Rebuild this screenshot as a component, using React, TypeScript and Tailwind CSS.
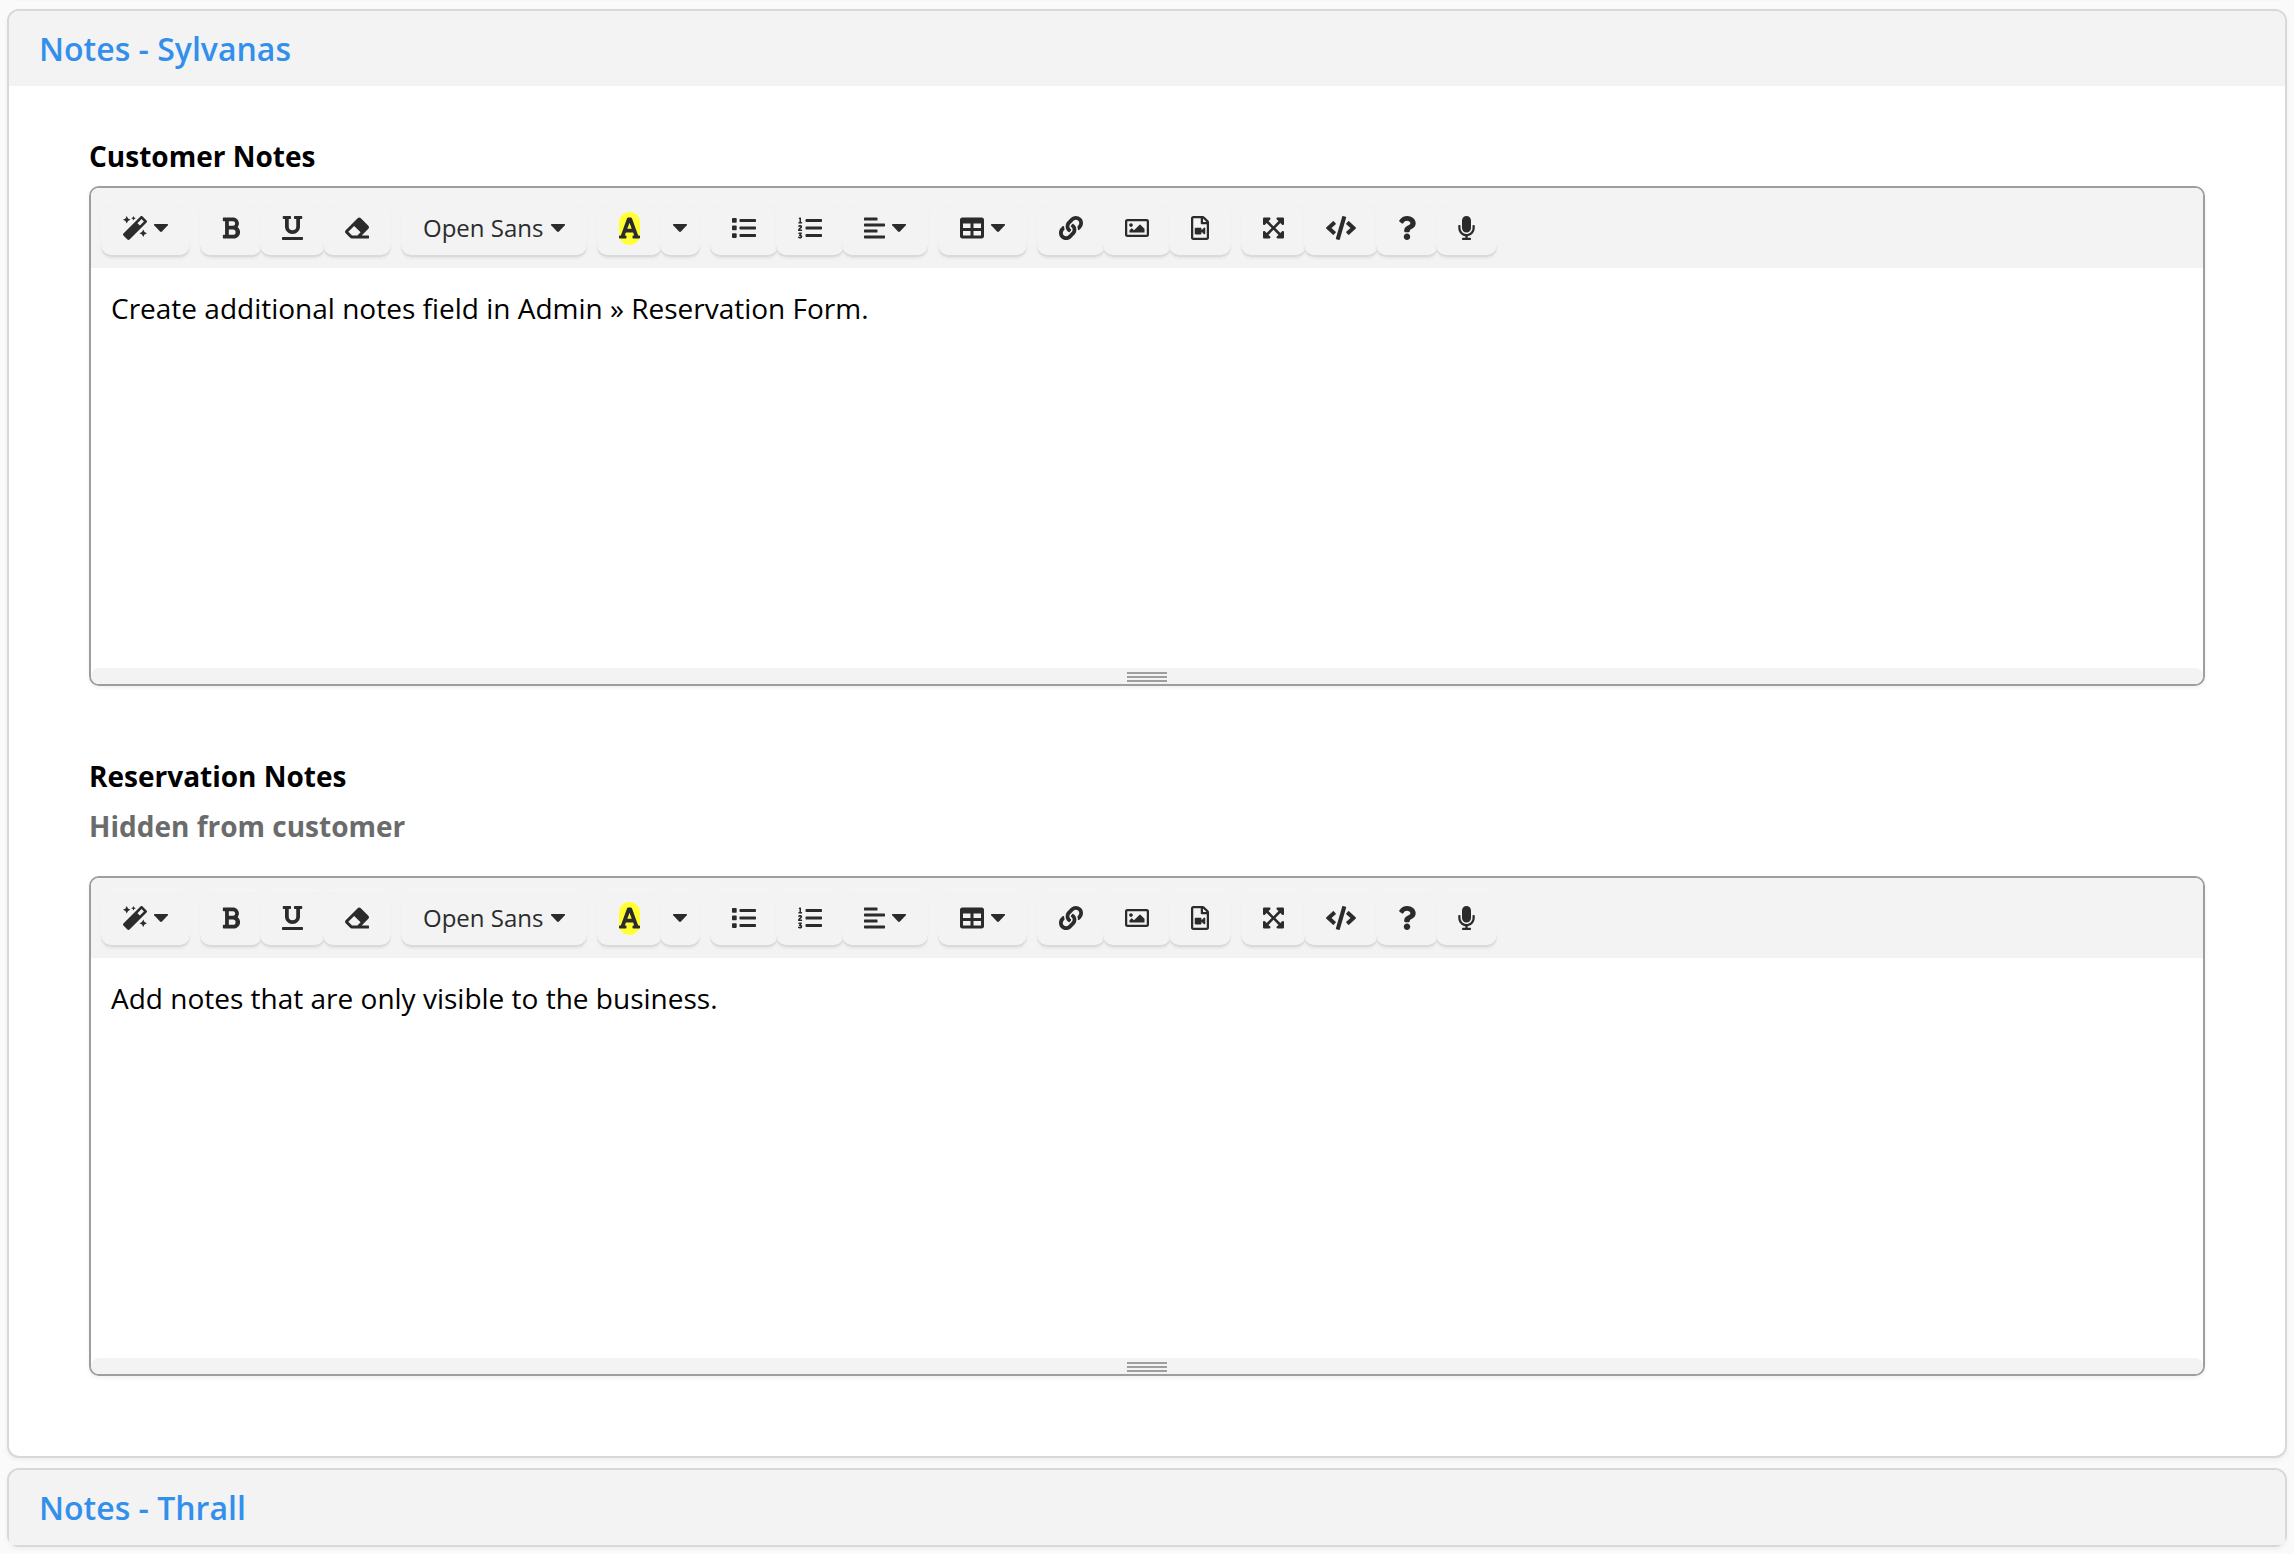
import React from "react";
import {
  FaMagic,
  FaBold,
  FaUnderline,
  FaEraser,
  FaFont,
  FaListOl,
  FaAlignLeft,
  FaTable,
  FaLink,
  FaRegImage,
  FaRegFileVideo,
  FaExpandArrowsAlt,
  FaCode,
  FaQuestion,
  FaMicrophone,
} from "react-icons/fa";

function Caret() {
  return (
    <svg viewBox="0 0 14 8" className="h-2 w-[14px]" fill="currentColor" aria-hidden="true">
      <path d="M.4 0h13.200q.6.500.2 1.200L8 7.600q-1 .8-2 0L.2 1.200Q-.2.500.4 0z" />
    </svg>
  );
}

function SquareList() {
  return (
    <svg viewBox="0 0 24 24" className="size-6" fill="currentColor" aria-hidden="true">
      <rect x="0" y="2" width="4.700" height="4.700" rx="0.8" />
      <rect x="0" y="9.600" width="4.700" height="4.700" rx="0.8" />
      <rect x="0" y="17.200" width="4.700" height="4.700" rx="0.8" />
      <rect x="7.500" y="3" width="16.500" height="3" rx="0.7" />
      <rect x="7.500" y="10.500" width="16.500" height="3" rx="0.7" />
      <rect x="7.500" y="18" width="16.500" height="3" rx="0.7" />
    </svg>
  );
}

type ToolProps = { label: string; tight?: boolean; children: React.ReactNode };

function Tool({ label, tight, children }: ToolProps) {
  return (
    <button
      type="button"
      aria-label={label}
      className={
        (tight ? "px-[13px]" : "px-[22px]") +
        " -ml-0.5 flex h-[58px] items-center gap-[7px] rounded-[10px] bg-[#f3f3f3] text-2xl leading-8 text-[#2b2b2b] shadow-[inset_0_2px_0_#f5f5f5,inset_0_-2px_0_#dadada,0_2px_3px_-1px_rgba(0,0,0,0.08)] first:ml-0"
      }
    >
      {children}
    </button>
  );
}

function Group({ children }: { children: React.ReactNode }) {
  return <div className="flex">{children}</div>;
}

function Toolbar() {
  return (
    <div className="flex flex-wrap gap-[10px] rounded-t-lg bg-[#f3f3f3] px-[10px] py-[11px]">
      <Group>
        <Tool label="Style">
          <FaMagic className="size-6" />
          <Caret />
        </Tool>
      </Group>
      <Group>
        <Tool label="Bold">
          <FaBold className="h-6 w-[18px]" />
        </Tool>
        <Tool label="Underline">
          <FaUnderline className="h-6 w-[21px]" />
        </Tool>
        <Tool label="Remove formatting">
          <FaEraser className="size-6" />
        </Tool>
      </Group>
      <Group>
        <Tool label="Font family">
          <span className="min-w-[121px] text-left">Open Sans</span>
          <Caret />
        </Tool>
      </Group>
      <Group>
        <Tool label="Recent colour">
          <span className="flex h-[33px] items-center rounded-[10px] bg-[#ffff33]">
            <FaFont className="h-6 w-[21px]" />
          </span>
        </Tool>
        <Tool label="More colours" tight>
          <Caret />
        </Tool>
      </Group>
      <Group>
        <Tool label="Unordered list">
          <SquareList />
        </Tool>
        <Tool label="Ordered list">
          <FaListOl className="size-6" />
        </Tool>
        <Tool label="Paragraph">
          <FaAlignLeft className="h-6 w-[21px]" />
          <Caret />
        </Tool>
      </Group>
      <Group>
        <Tool label="Table">
          <FaTable className="size-6" />
          <Caret />
        </Tool>
      </Group>
      <Group>
        <Tool label="Link">
          <FaLink className="size-6" />
        </Tool>
        <Tool label="Picture">
          <FaRegImage className="size-6" />
        </Tool>
        <Tool label="Video">
          <FaRegFileVideo className="h-6 w-[18px]" />
        </Tool>
      </Group>
      <Group>
        <Tool label="Full screen">
          <FaExpandArrowsAlt className="h-6 w-[21px]" />
        </Tool>
        <Tool label="Code view">
          <FaCode className="h-6 w-[30px]" />
        </Tool>
        <Tool label="Help">
          <FaQuestion className="h-6 w-[18px]" />
        </Tool>
        <Tool label="Dictate">
          <FaMicrophone className="h-6 w-[17px]" />
        </Tool>
      </Group>
    </div>
  );
}

function Editor({ id, text }: { id: string; text: string }) {
  return (
    <div className="rounded-[10px] border-2 border-[#9e9e9e] bg-white shadow-[0_2px_4px_rgba(0,0,0,0.06)]">
      <Toolbar />
      <textarea
        id={id}
        defaultValue={text}
        className="block h-[400px] w-full resize-none bg-white p-5 text-[28px] leading-10 text-black outline-none"
      />
      <div className="flex h-4 flex-col items-center gap-0.5 rounded-lg bg-[#f3f3f3] pt-1">
        <div className="h-0.5 w-10 bg-[#9e9e9e]" />
        <div className="h-0.5 w-10 bg-[#9e9e9e]" />
        <div className="h-0.5 w-10 bg-[#9e9e9e]" />
      </div>
    </div>
  );
}

function Card({ title, children }: { title: string; children?: React.ReactNode }) {
  return (
    <section className="rounded-xl border-2 border-[#d8d8d8] bg-white shadow-[0_2px_4px_rgba(0,0,0,0.05)]">
      <h2 className="flex h-[75px] items-center rounded-t-[10px] bg-[#f3f3f3] px-[30px] text-[32px] leading-10 font-semibold text-[#338fec]">
        <a href="#">{title}</a>
      </h2>
      {children}
    </section>
  );
}

export default function App() {
  return (
    <div className="min-h-screen bg-[#fafafa] font-['Open_Sans',sans-serif]">
      <div className="mx-3 h-px bg-[#f6f6f6]" />
      <main className="flex flex-col gap-[10px] px-[7px] pt-2">
        <Card title="Notes - Sylvanas">
          <div className="px-20 pt-[50px] pb-20">
            <label htmlFor="customer-notes" className="mb-[10px] block text-[28px] leading-10 font-bold text-black">
              Customer Notes
            </label>
            <Editor id="customer-notes" text="Create additional notes field in Admin » Reservation Form." />
            <label
              htmlFor="reservation-notes"
              className="mt-[65px] mb-[25px] block text-[28px] leading-[50px] font-bold text-black"
            >
              Reservation Notes
              <span className="block text-[#6b6b6b]">Hidden from customer</span>
            </label>
            <Editor id="reservation-notes" text="Add notes that are only visible to the business." />
          </div>
        </Card>
        <Card title="Notes - Thrall" />
      </main>
    </div>
  );
}
